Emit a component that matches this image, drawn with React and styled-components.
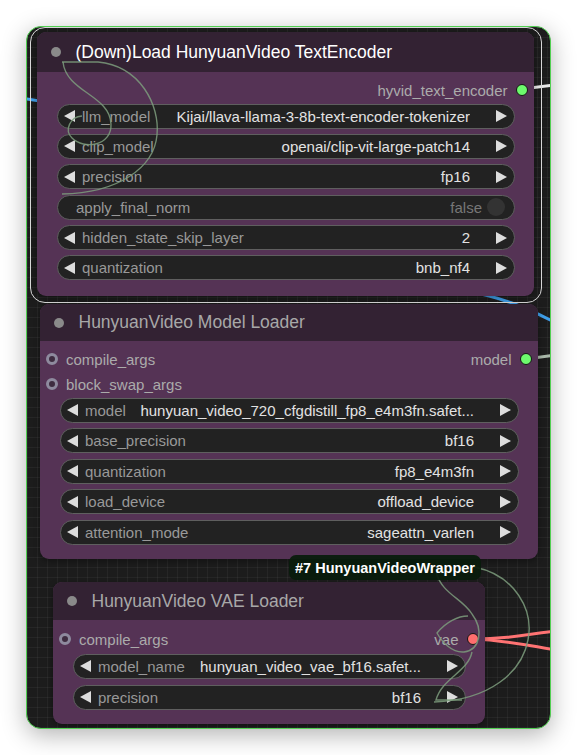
import React from 'react';
import styled, { createGlobalStyle } from 'styled-components';

const Global = createGlobalStyle`
  html, body { margin: 0; padding: 0; background: #ffffff; }
  body { font-family: "Liberation Sans", Arial, sans-serif; }
`;

const Page = styled.div`
  padding: 26px;
  width: 525px;
`;

const Canvas = styled.div`
  position: relative;
  width: 525px;
  height: 703px;
  box-sizing: border-box;
  border: 1px solid #52cf52;
  border-radius: 15px;
  overflow: hidden;
  background-color: #1c1c1c;
  background-image:
    linear-gradient(to right, rgba(255, 255, 255, 0.045) 1px, transparent 1px),
    linear-gradient(to bottom, rgba(255, 255, 255, 0.045) 1px, transparent 1px);
  background-size: 10px 10px;
  box-shadow: 0 6px 24px rgba(0, 0, 0, 0.3);
`;

const LinkLayer = styled.svg`
  position: absolute;
  left: 0;
  top: 0;
  width: 523px;
  height: 701px;
  z-index: ${(p) => p.$z};
  pointer-events: none;
`;

const NodeBox = styled.div`
  position: absolute;
  left: ${(p) => p.$x}px;
  top: ${(p) => p.$y}px;
  width: ${(p) => p.$w}px;
  height: ${(p) => p.$h}px;
  display: flex;
  flex-direction: column;
  background: #553355;
  border-radius: 9px;
  z-index: 1;
  box-shadow: 0 2px 6px rgba(0, 0, 0, 0.35);

  &::before {
    content: '';
    display: ${(p) => (p.$selected ? 'block' : 'none')};
    position: absolute;
    left: -7.5px;
    right: -7.5px;
    top: -5px;
    bottom: -7px;
    border: 1.5px solid #d8d8d8;
    border-radius: 15px;
    pointer-events: none;
  }
`;

const TitleBar = styled.div`
  flex: none;
  height: ${(p) => p.$h}px;
  display: flex;
  align-items: center;
  gap: 14.5px;
  padding-left: 14px;
  background: #332233;
  border-radius: 9px 9px 0 0;
  color: ${(p) => (p.$selected ? '#ffffff' : '#a8a8a8')};
  font-size: 17.5px;
  white-space: nowrap;
`;

const TitleDot = styled.span`
  flex: none;
  width: 10px;
  height: 10px;
  border-radius: 50%;
  background: #8a8a8a;
`;

const Body = styled.div`
  display: flex;
  flex-direction: column;
  padding-top: ${(p) => p.$pt}px;
`;

const SlotRow = styled.div`
  height: 25px;
  display: flex;
  align-items: center;
  padding: 0 6.5px 0 6px;
  font-size: 15px;
  color: #ababab;
`;

const Slot = styled.div`
  display: flex;
  align-items: center;
  gap: 8px;
  margin-left: ${(p) => (p.$out ? 'auto' : '0')};
`;

const InDot = styled.span`
  flex: none;
  width: 12px;
  height: 12px;
  box-sizing: border-box;
  border-radius: 50%;
  border: 3px solid #8e8a9e;
  background: #3e2c40;
`;

const OutDot = styled.span`
  flex: none;
  width: 12px;
  height: 12px;
  box-sizing: border-box;
  border-radius: 50%;
  border: 1.5px solid #151515;
  background: ${(p) => p.$c};
`;

const Widgets = styled.div`
  display: flex;
  flex-direction: column;
  gap: ${(p) => p.$gap}px;
  margin-top: ${(p) => p.$mt}px;
`;

const WidgetBox = styled.div`
  height: 25px;
  box-sizing: border-box;
  margin: 0 19px 0 20px;
  border: 1px solid #5f5f5f;
  border-radius: 13px;
  background: #222222;
  display: flex;
  align-items: center;
  font-size: 15px;
  white-space: nowrap;
  padding: ${(p) => (p.$toggle ? '0 9px 0 18px' : '0 7px 0 6px')};
`;

const Arrow = styled.svg`
  flex: none;
  width: 11px;
  height: 12px;
`;

const Label = styled.span`
  flex: none;
  color: #999999;
  margin-left: ${(p) => (p.$toggle ? 0 : 7)}px;
`;

const Value = styled.span`
  flex: 1;
  min-width: 0;
  overflow: hidden;
  text-align: right;
  color: ${(p) => (p.$muted ? '#777777' : '#e2e2e2')};
  margin: 0 ${(p) => (p.$toggle ? 5 : 26)}px 0 8px;
`;

const Knob = styled.span`
  flex: none;
  width: 18px;
  height: 18px;
  border-radius: 50%;
  background: #333333;
`;

const Badge = styled.div`
  position: absolute;
  left: 262px;
  top: 528px;
  width: 192px;
  height: 25px;
  box-sizing: border-box;
  padding-left: 6px;
  display: flex;
  align-items: center;
  background: rgba(9, 28, 12, 0.94);
  border-radius: 7px;
  color: #ffffff;
  font-weight: bold;
  font-size: 14.5px;
  white-space: nowrap;
  z-index: 3;
`;

const LeftArrow = () => (
  <Arrow viewBox="0 0 11 12">
    <polygon points="11,0 0,6 11,12" fill="#dddddd" />
  </Arrow>
);

const RightArrow = () => (
  <Arrow viewBox="0 0 11 12">
    <polygon points="0,0 11,6 0,12" fill="#dddddd" />
  </Arrow>
);

const ComboWidget = ({ label, value }) => (
  <WidgetBox>
    <LeftArrow />
    <Label>{label}</Label>
    <Value>{value}</Value>
    <RightArrow />
  </WidgetBox>
);

const ToggleWidget = ({ label, value }) => (
  <WidgetBox $toggle>
    <Label $toggle>{label}</Label>
    <Value $toggle $muted>
      {value}
    </Value>
    <Knob />
  </WidgetBox>
);

const Node = ({ x, y, w, h, titleH, title, selected, pt, gap, mt, slots, widgets }) => (
  <NodeBox $x={x} $y={y} $w={w} $h={h} $selected={selected}>
    <TitleBar $h={titleH} $selected={selected}>
      <TitleDot />
      <span>{title}</span>
    </TitleBar>
    <Body $pt={pt}>
      {slots.map((s, i) => (
        <SlotRow key={i}>
          {s.input && (
            <Slot>
              <InDot />
              <span>{s.input}</span>
            </Slot>
          )}
          {s.output && (
            <Slot $out>
              <span>{s.output}</span>
              <OutDot $c={s.color} />
            </Slot>
          )}
        </SlotRow>
      ))}
      <Widgets $gap={gap} $mt={mt}>
        {widgets.map((wd, i) =>
          wd.toggle ? (
            <ToggleWidget key={i} label={wd.label} value={wd.value} />
          ) : (
            <ComboWidget key={i} label={wd.label} value={wd.value} />
          )
        )}
      </Widgets>
    </Body>
  </NodeBox>
);

const textEncoderWidgets = [
  { label: 'llm_model', value: 'Kijai/llava-llama-3-8b-text-encoder-tokenizer' },
  { label: 'clip_model', value: 'openai/clip-vit-large-patch14' },
  { label: 'precision', value: 'fp16' },
  { label: 'apply_final_norm', value: 'false', toggle: true },
  { label: 'hidden_state_skip_layer', value: '2' },
  { label: 'quantization', value: 'bnb_nf4' },
];

const modelLoaderWidgets = [
  { label: 'model', value: 'hunyuan_video_720_cfgdistill_fp8_e4m3fn.safet...' },
  { label: 'base_precision', value: 'bf16' },
  { label: 'quantization', value: 'fp8_e4m3fn' },
  { label: 'load_device', value: 'offload_device' },
  { label: 'attention_mode', value: 'sageattn_varlen' },
];

const vaeWidgets = [
  { label: 'model_name', value: 'hunyuan_video_vae_bf16.safet...' },
  { label: 'precision', value: 'bf16' },
];

export default function App() {
  return (
    <>
      <Global />
      <Page>
        <Canvas>
          <LinkLayer $z={0} viewBox="27 27 523 701">
            <g fill="none" strokeWidth="3" strokeLinecap="round">
              <path d="M 10 96 C 22 98, 32 100, 48 102" stroke="#3f9ee8" />
              <path d="M 522 89 L 562 84" stroke="#e8e8e8" />
              <path d="M 462 290 C 500 297, 522 305, 562 326" stroke="#3f9ee8" />
              <path d="M 526 359 L 562 354" stroke="#a9b8a9" />
              <path d="M 473 639 C 505 639, 525 635, 562 630" stroke="#ff7373" />
              <path d="M 473 639 C 505 640, 525 645, 562 651" stroke="#ff7373" />
            </g>
          </LinkLayer>

          <Node
            x={10}
            y={5}
            w={497}
            h={264}
            titleH={40}
            title="(Down)Load HunyuanVideo TextEncoder"
            selected
            pt={5.5}
            mt={1}
            gap={5.4}
            slots={[{ output: 'hyvid_text_encoder', color: '#6dfa6d' }]}
            widgets={textEncoderWidgets}
          />

          <Node
            x={13}
            y={277}
            w={498}
            h={255}
            titleH={37}
            title="HunyuanVideo Model Loader"
            pt={5.5}
            mt={1}
            gap={5.5}
            slots={[
              { input: 'compile_args', output: 'model', color: '#6dfa6d' },
              { input: 'block_swap_args' },
            ]}
            widgets={modelLoaderWidgets}
          />

          <Node
            x={26}
            y={555}
            w={432}
            h={142}
            titleH={38}
            title="HunyuanVideo VAE Loader"
            pt={6.5}
            mt={2}
            gap={6}
            slots={[{ input: 'compile_args', output: 'vae', color: '#ff6e6e' }]}
            widgets={vaeWidgets}
          />

          <LinkLayer $z={2} viewBox="27 27 523 701">
            <g fill="none" stroke="#7d9c7d" strokeOpacity="0.85" strokeWidth="1.4">
              <path d="M 62 62 L 98 62 C 140 66, 160 105, 157 135 C 154 168, 118 193, 62 194" />
              <path d="M 63 62 C 66 92, 110 95, 111 124 C 112 146, 84 150, 72 138 C 64 130, 70 117, 82 116" />
              <path d="M 474 567 C 515 575, 534 610, 528 640 C 522 672, 490 700, 434 702" />
              <path d="M 436 572 C 442 594, 462 598, 472 614 C 484 630, 480 650, 464 652 C 452 653, 442 642, 437 633 C 446 622, 458 616, 468 616" />
              <path d="M 472 652 C 468 672, 442 678, 436 700 L 462 700" />
            </g>
          </LinkLayer>

          <Badge>#7 HunyuanVideoWrapper</Badge>
        </Canvas>
      </Page>
    </>
  );
}
